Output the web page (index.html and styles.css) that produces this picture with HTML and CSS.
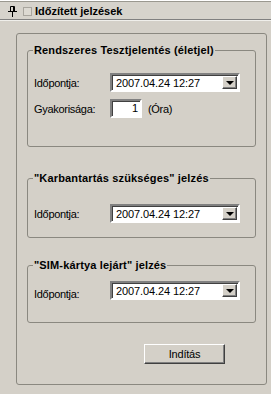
FILE: index.html
```html
<!DOCTYPE html>
<html>
<head>
    <meta charset="utf-8">
    <link rel="stylesheet" href="styles.css">
</head>
<body>
    <div class="titlebar">
        <svg class="pin" width="10" height="11" viewBox="0 0 10 11">
            <path d="M2.5 0.5h4v5h-4z M0 5.5h9 M4.5 6v5" fill="none" stroke="#000" stroke-width="1"/>
            <path d="M5.5 1v4" stroke="#000" stroke-width="1"/>
        </svg>
        <span class="check"></span>
        <span class="title">Időzített jelzések</span>
    </div>

    <div class="panel">
        <fieldset class="group group-first">
            <legend>Rendszeres Tesztjelentés (életjel)</legend>
            <div class="row">
                <span class="label">Időpontja:</span>
                <div class="combo">
                    <span class="combo-text">2007.04.24 12:27</span>
                    <span class="combo-btn"><span class="arrow"></span></span>
                </div>
            </div>
            <div class="row row-gap">
                <span class="label">Gyakorisága:</span>
                <div class="num">1</div>
                <span class="unit">(Óra)</span>
            </div>
        </fieldset>

        <fieldset class="group group-second">
            <legend>"Karbantartás szükséges" jelzés</legend>
            <div class="row">
                <span class="label">Időpontja:</span>
                <div class="combo">
                    <span class="combo-text">2007.04.24 12:27</span>
                    <span class="combo-btn"><span class="arrow"></span></span>
                </div>
            </div>
        </fieldset>

        <fieldset class="group group-third">
            <legend>"SIM-kártya lejárt" jelzés</legend>
            <div class="row">
                <span class="label label-low">Időpontja:</span>
                <div class="combo">
                    <span class="combo-text">2007.04.24 12:27</span>
                    <span class="combo-btn"><span class="arrow"></span></span>
                </div>
            </div>
        </fieldset>

        <div class="actions">
            <button class="button">Indítás</button>
        </div>
    </div>
</body>
</html>
```

FILE: styles.css
```css
body {
    margin: 0;
    background: #d4d0c8;
    font-family: 'Liberation Sans', Arial, sans-serif;
    font-size: 11px;
    color: #000;
    width: 271px;
    height: 394px;
    overflow: hidden;
}

.titlebar {
    height: 17px;
    border-top: 1px solid #fff;
    box-shadow: inset 0 1px 0 #9a9890;
    border-bottom: 1px solid #808080;
    padding-top: 1px;
    display: flex;
    align-items: center;
    background: #d6d3cc;
    position: relative;
}

.titlebar::after {
    content: "";
    position: absolute;
    left: 0;
    right: 0;
    bottom: -2px;
    height: 1px;
    background: #f0efeb;
}

.pin {
    margin-left: 8px;
    margin-top: 1px;
}

.check {
    width: 7px;
    height: 7px;
    border: 1px solid #a8a59e;
    background: #dcd9d2;
    margin-left: 5px;
    margin-top: 1px;
}

.title {
    font-weight: bold;
    margin-left: 3px;
    margin-top: 1px;
}

.panel {
    margin: 13px 0 0 16px;
    width: 229px;
    border: 1px solid #8a8880;
    border-radius: 3px;
    padding: 10px 10px 20px 10px;
}

.group {
    margin: 0;
    padding: 0 6px;
    border: 1px solid #8a8880;
    border-radius: 3px;
    min-width: 0;
}

.group legend {
    font-weight: bold;
    line-height: 13px;
    padding: 0 1px;
    margin-left: -1px;
    letter-spacing: 0.15px;
}

.group-first {
    padding-top: 16px;
    padding-bottom: 28px;
}

.group-second {
    margin-top: 25px;
    padding-top: 19px;
    padding-bottom: 14px;
}

.group-third {
    margin-top: 21px;
    padding-top: 9px;
    padding-bottom: 22px;
}

.row {
    display: flex;
    align-items: center;
    height: 19px;
}

.row-gap {
    margin-top: 7px;
}

.label {
    width: 76px;
    letter-spacing: -0.3px;
}

.label-low {
    margin-top: 6px;
}

.combo {
    width: 126px;
    height: 15px;
    border-top: 2px solid #808080;
    border-left: 2px solid #808080;
    border-bottom: 2px solid #fff;
    border-right: 2px solid #fff;
    background: #fff;
    display: flex;
    align-items: center;
    box-shadow: inset 1px 1px 0 #404040;
}

.combo-text {
    flex: 1;
    padding-left: 4px;
    letter-spacing: -0.1px;
}

.combo-btn {
    width: 13px;
    height: 11px;
    margin-right: 1px;
    background: #d4d0c8;
    border-top: 1px solid #fff;
    border-left: 1px solid #fff;
    border-right: 1px solid #404040;
    border-bottom: 1px solid #404040;
    box-shadow: inset -1px -1px 0 #808080;
    display: flex;
    align-items: center;
    justify-content: center;
}

.arrow {
    width: 0;
    height: 0;
    border-left: 4px solid transparent;
    border-right: 4px solid transparent;
    border-top: 4px solid #000;
    margin-top: 1px;
}

.num {
    width: 26px;
    height: 15px;
    border-top: 2px solid #808080;
    border-left: 2px solid #808080;
    border-bottom: 2px solid #fff;
    border-right: 2px solid #fff;
    box-shadow: inset 1px 1px 0 #404040;
    background: #fff;
    text-align: right;
    padding-right: 2px;
    line-height: 15px;
}

.unit {
    margin-left: 6px;
    letter-spacing: -0.3px;
}

.actions {
    display: flex;
    justify-content: flex-end;
    padding-right: 31px;
    margin-top: 21px;
}

.button {
    width: 81px;
    height: 20px;
    font-family: 'Liberation Sans', Arial, sans-serif;
    font-size: 11px;
    letter-spacing: -0.2px;
    background: #d4d0c8;
    color: #000;
    border-top: 1px solid #fff;
    border-left: 1px solid #fff;
    border-right: 1px solid #404040;
    border-bottom: 1px solid #404040;
    box-shadow: inset -1px -1px 0 #808080;
    padding: 0;
    border-radius: 0;
}
```
